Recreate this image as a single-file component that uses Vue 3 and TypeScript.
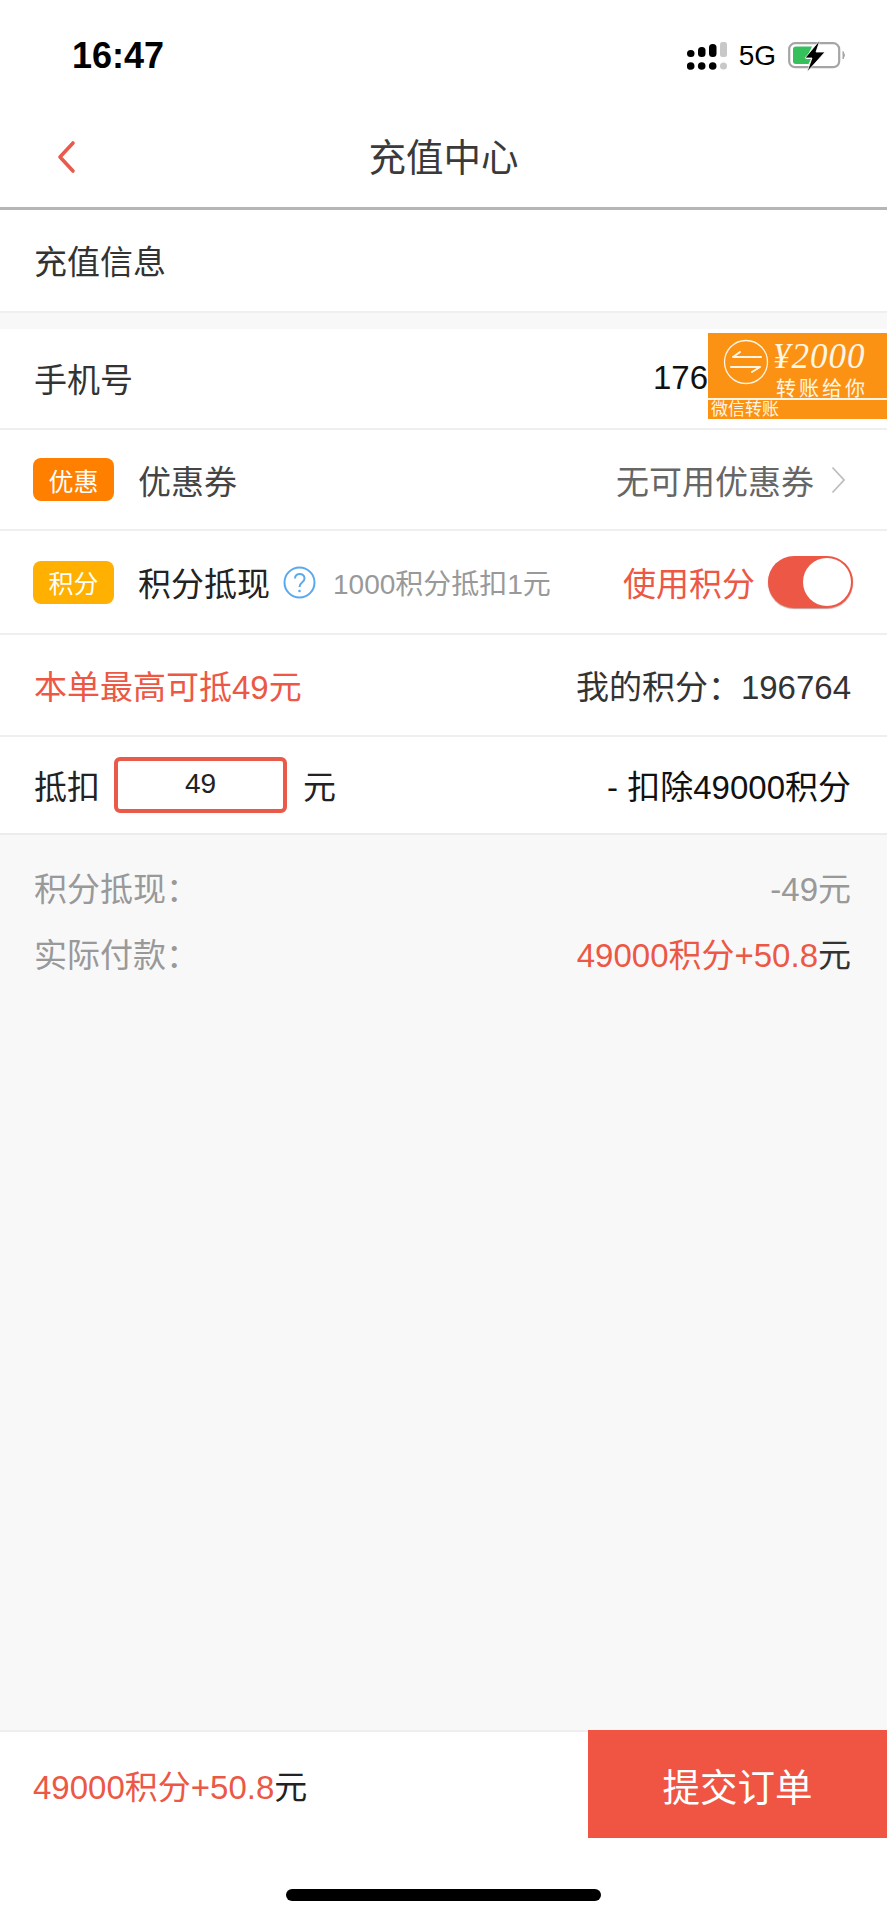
<template>
  <div class="page">
    <div class="status-bar">
      <span class="clock">16:47</span>
      <div class="status-icons">
        <svg class="signal" width="40" height="29" viewBox="0 0 40 29">
          <g fill="#000">
            <rect x="0" y="8" width="7.500" height="7" rx="3.500" />
            <rect x="11" y="5" width="7.500" height="10" rx="3.500" />
            <rect x="22" y="2" width="7.500" height="13" rx="3.500" />
            <circle cx="3.700" cy="24" r="3.800" />
            <circle cx="14.700" cy="24" r="3.800" />
            <circle cx="25.700" cy="24" r="3.800" />
          </g>
          <g fill="#c8c8c8">
            <rect x="33" y="0" width="7" height="15" rx="2.500" />
            <circle cx="36.500" cy="24" r="3.500" />
          </g>
        </svg>
        <span class="network">5G</span>
        <svg class="battery" width="60" height="32" viewBox="0 0 60 32">
          <rect x="1.200" y="3.200" width="50" height="24" rx="6" fill="#fff" stroke="#a5a5a5" stroke-width="2.200" />
          <path d="M55 11.500 Q58 15 55 19 Z" fill="#a5a5a5" stroke="#a5a5a5" />
          <path d="M5 9 Q5 6.500 8 6.500 H24 L18 19 H23 L20.500 24 H8 Q5 24 5 21.500 Z" fill="#36c05c" />
          <path d="M32 0 L17 18 H24 L19 32 L37 12 H28 Z" fill="#000" stroke="#fff" stroke-width="0.800" />
        </svg>
      </div>
    </div>

    <header class="nav-bar">
      <svg class="back" width="20" height="34" viewBox="0 0 20 34">
        <path d="M17 3 L4 17 L17 31" fill="none" stroke="#e85a4a" stroke-width="3.600" stroke-linecap="round" stroke-linejoin="round" />
      </svg>
      <h1 class="nav-title">充值中心</h1>
    </header>

    <div class="row section-title">充值信息</div>

    <div class="gap"></div>

    <div class="row phone-row">
      <span>手机号</span>
      <span class="phone">176</span>
      <!-- 悬浮广告 -->
      <div class="ad">
        <div class="ad-top">
          <svg class="ad-logo" width="46" height="46" viewBox="0 0 46 46">
            <circle cx="23" cy="23" r="21.500" fill="none" stroke="#fff6e6" stroke-width="1.300" />
            <path d="M38 18 H10 L17 13 M8 28 H37 L29 33" fill="none" stroke="#fff6e6" stroke-width="2" stroke-linecap="round" stroke-linejoin="round" />
          </svg>
          <div class="ad-copy">
            <span class="ad-amount">¥2000</span>
            <span class="ad-note">转账给你</span>
          </div>
        </div>
        <div class="ad-bottom">微信转账</div>
      </div>
    </div>

    <div class="row coupon-row">
      <span class="tag tag-coupon">优惠</span>
      <span class="label label-soft">优惠券</span>
      <span class="value muted">无可用优惠券</span>
      <svg class="chevron" width="15" height="28" viewBox="0 0 15 28">
        <path d="M1.500 1.500 L13 14 L1.500 26.500" fill="none" stroke="#bdbdbd" stroke-width="1.800" />
      </svg>
    </div>

    <div class="row points-row">
      <span class="tag tag-points">积分</span>
      <span class="label">积分抵现</span>
      <svg class="help" width="33" height="33" viewBox="0 0 33 33">
        <circle cx="16.500" cy="16.500" r="15" fill="none" stroke="#5aa9ee" stroke-width="2" />
        <path d="M12 12.500 C12 6.500 21.500 6.500 21.500 12.500 C21.500 16.500 16.500 16 16.500 21" fill="none" stroke="#5aa9ee" stroke-width="2" />
        <circle cx="16.500" cy="25" r="1.300" fill="#5aa9ee" />
      </svg>
      <span class="hint">1000积分抵扣1元</span>
      <span class="value accent">使用积分</span>
      <button class="toggle" :class="{ on: usePoints }" @click="usePoints = !usePoints">
        <span class="knob"></span>
      </button>
    </div>

    <div class="row">
      <span class="accent">本单最高可抵{{ maxDeduct }}元</span>
      <span class="value my-points">我的积分：<span class="points-num">{{ myPoints }}</span></span>
    </div>

    <div class="row deduct-row">
      <span class="deduct-label">抵扣</span>
      <div class="deduct-input">{{ maxDeduct }}</div>
      <span class="deduct-unit">元</span>
      <span class="value">- 扣除49000积分</span>
    </div>

    <main class="summary">
      <div class="summary-line">
        <span>积分抵现：</span>
        <span>-49元</span>
      </div>
      <div class="summary-line">
        <span>实际付款：</span>
        <span><span class="accent">{{ payText }}</span><span class="dark">元</span></span>
      </div>
    </main>

    <footer class="footer">
      <div class="footer-bar">
        <span class="footer-price"><span class="accent">{{ payText }}</span>元</span>
        <button class="submit">提交订单</button>
      </div>
      <div class="home-area">
        <span class="home-bar"></span>
      </div>
    </footer>
  </div>
</template>

<script setup lang="ts">
import { ref } from 'vue';

const usePoints = ref(true);
const maxDeduct = 49;
const myPoints = 196764;
const payText = '49000积分+50.8';
</script>

<style>
html,
body {
  margin: 0;
  background: #fff;
}
</style>

<style scoped>
.page {
  width: 887px;
  height: 1919px;
  display: flex;
  flex-direction: column;
  overflow: hidden;
  background: #fff;
  color: #333;
  font-family: "Liberation Sans", "Noto Sans CJK SC", sans-serif;
  font-size: 33px;
}

/* --- status bar --- */
.status-bar {
  height: 112px;
  box-sizing: border-box;
  padding: 0 39px 0 72px;
  display: flex;
  align-items: center;
  justify-content: space-between;
  flex-shrink: 0;
}

.clock {
  font-size: 36px;
  font-weight: 700;
  color: #000;
}

.status-icons {
  display: flex;
  align-items: center;
  gap: 12px;
}

.signal {
  display: block;
}

.network {
  font-size: 28px;
  color: #000;
}

.battery {
  display: block;
}

/* --- nav --- */
.nav-bar {
  height: 98px;
  box-sizing: border-box;
  border-bottom: 3px solid #b6b6b6;
  position: relative;
  display: flex;
  align-items: center;
  justify-content: center;
  padding-bottom: 10px;
  flex-shrink: 0;
}

.back {
  position: absolute;
  left: 56px;
  top: 28px;
}

.nav-title {
  margin: 0;
  font-size: 37.500px;
  font-weight: 400;
  color: #3a3a3a;
}

/* --- rows --- */
.row {
  height: 102px;
  box-sizing: border-box;
  padding: 0 36px 0 34px;
  border-bottom: 2px solid #efefef;
  display: flex;
  align-items: center;
  flex-shrink: 0;
  background: #fff;
}

.section-title {
  height: 103px;
  padding-bottom: 2px;
  color: #333;
}

.gap {
  height: 16px;
  background: #f8f8f8;
  flex-shrink: 0;
}

.phone-row {
  height: 101px;
  padding-bottom: 2px;
  position: relative;
  justify-content: space-between;
}

.coupon-row {
  height: 101px;
}

.points-row {
  height: 104px;
}

.phone {
  position: absolute;
  left: 653px;
  color: #111;
}

.ad {
  position: absolute;
  right: 0;
  top: 4px;
  width: 179px;
  height: 86px;
  background: #fb9213;
  color: #fff6e6;
  display: flex;
  flex-direction: column;
  overflow: hidden;
}

.ad-top {
  height: 67px;
  flex-shrink: 0;
  box-sizing: border-box;
  display: flex;
  padding: 6px 0 0 15px;
  gap: 4px;
  border-bottom: 2px solid #fff6e6;
}

.ad-logo {
  display: block;
  flex-shrink: 0;
}

.ad-copy {
  display: flex;
  flex-direction: column;
  align-items: flex-start;
}

.ad-amount {
  font-family: "Liberation Serif", serif;
  font-style: italic;
  font-size: 35px;
  line-height: 36px;
  letter-spacing: 1px;
}

.ad-note {
  margin-top: 3px;
  margin-left: 3px;
  font-size: 20px;
  line-height: 22px;
  letter-spacing: 3px;
  white-space: nowrap;
}

.ad-bottom {
  padding-left: 3px;
  font-size: 17px;
  line-height: 19px;
}

.tag {
  width: 81px;
  height: 43px;
  border-radius: 8px;
  color: #fff;
  font-size: 25px;
  display: flex;
  align-items: center;
  justify-content: center;
  flex-shrink: 0;
  margin-left: -1px;
}

.tag-coupon {
  background: #ff8000;
}

.tag-points {
  background: #ffb000;
}

.label {
  margin-left: 24px;
  color: #222;
}

.label-soft {
  color: #444;
}

.value {
  margin-left: auto;
  color: #111;
}

.muted {
  color: #666;
}

.accent {
  color: #ec5845;
}

.dark {
  color: #333;
}

.chevron {
  display: block;
  margin-left: 17px;
  margin-right: 5px;
}

.help {
  display: block;
  margin-left: 13px;
}

.hint {
  margin-left: 17px;
  font-size: 28px;
  color: #999;
}

.toggle {
  width: 85px;
  height: 52px;
  margin-left: 13px;
  margin-right: -2px;
  padding: 2px;
  border: 0;
  border-radius: 26px;
  background: #ec5845;
  display: flex;
  justify-content: flex-start;
  box-shadow: 0 1px 1px rgba(150, 50, 40, 0.5);
}

.toggle.on {
  justify-content: flex-end;
}

.knob {
  width: 48px;
  height: 48px;
  border-radius: 50%;
  background: #fff;
}

.my-points {
  color: #333;
}

.deduct-row {
  height: 98px;
  border-bottom-color: #ececec;
}

.deduct-label {
  color: #222;
}

.deduct-input {
  width: 173px;
  height: 56px;
  box-sizing: border-box;
  margin-left: 14px;
  border: 4px solid #e95a4a;
  border-radius: 6px;
  display: flex;
  align-items: center;
  justify-content: center;
  font-size: 28px;
  color: #222;
  padding-bottom: 2px;
}

.deduct-unit {
  margin-left: 16px;
  color: #222;
}

/* --- summary --- */
.summary {
  flex: 1;
  background: #f8f8f8;
  padding: 19px 36px 0 34px;
  color: #999;
}

.summary-line {
  height: 66px;
  display: flex;
  align-items: center;
  justify-content: space-between;
}

/* --- footer --- */
.footer {
  flex-shrink: 0;
  background: #fff;
}

.footer-bar {
  height: 108px;
  box-sizing: border-box;
  border-top: 2px solid #efefef;
  display: flex;
  align-items: center;
  justify-content: space-between;
  padding-left: 33px;
  color: #222;
  position: relative;
}

.submit {
  position: absolute;
  right: 0;
  top: -2px;
  width: 299px;
  height: 108px;
  border: 0;
  padding: 0;
  background: #f05543;
  color: #fff;
  font-family: inherit;
  font-size: 37.500px;
}

.home-area {
  height: 81px;
  box-sizing: border-box;
  padding-top: 51px;
  display: flex;
  justify-content: center;
}

.home-bar {
  width: 315px;
  height: 12px;
  border-radius: 6px;
  background: #000;
}
</style>
